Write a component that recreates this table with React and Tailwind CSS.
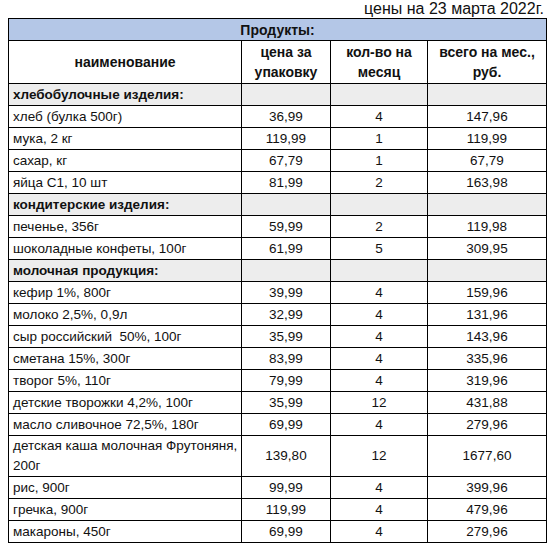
const groups = [
  {
    title: "хлебобулочные изделия:",
    items: [
      ["хлеб (булка 500г)", "36,99", "4", "147,96"],
      ["мука, 2 кг", "119,99", "1", "119,99"],
      ["сахар, кг", "67,79", "1", "67,79"],
      ["яйца С1, 10 шт", "81,99", "2", "163,98"],
    ],
  },
  {
    title: "кондитерские изделия:",
    items: [
      ["печенье, 356г", "59,99", "2", "119,98"],
      ["шоколадные конфеты, 100г", "61,99", "5", "309,95"],
    ],
  },
  {
    title: "молочная продукция:",
    items: [
      ["кефир 1%, 800г", "39,99", "4", "159,96"],
      ["молоко 2,5%, 0,9л", "32,99", "4", "131,96"],
      ["сыр российский  50%, 100г", "35,99", "4", "143,96"],
      ["сметана 15%, 300г", "83,99", "4", "335,96"],
      ["творог 5%, 110г", "79,99", "4", "319,96"],
      ["детские творожки 4,2%, 100г", "35,99", "12", "431,88"],
      ["масло сливочное 72,5%, 180г", "69,99", "4", "279,96"],
      ["детская каша молочная Фрутоняня,\n200г", "139,80", "12", "1677,60"],
      ["рис, 900г", "99,99", "4", "399,96"],
      ["гречка, 900г", "119,99", "4", "479,96"],
      ["макароны, 450г", "69,99", "4", "279,96"],
    ],
  },
];

const cell = "border border-black px-1 align-middle";

export default function App() {
  return (
    <div className="w-[551px] h-[543px] bg-white text-[#111] font-['Liberation_Sans',Arial,sans-serif] overflow-hidden">
      <div className="h-[18px] pr-[7px] text-right text-[16px] leading-[18px]">
        цены на 23 марта 2022г.
      </div>
      <table className="ml-[8px] w-[538px] border-collapse table-fixed text-[13.5px] leading-[20px]">
        <colgroup>
          <col className="w-[233px]" />
          <col className="w-[89px]" />
          <col className="w-[97px]" />
          <col className="w-[119px]" />
        </colgroup>
        <tbody>
          <tr className="h-[22px] bg-[#b4c7e7]">
            <td colSpan={4} className={`${cell} text-center font-bold text-[14px]`}>
              Продукты:
            </td>
          </tr>
          <tr className="h-[43px] font-bold text-center text-[14px]">
            <td className={cell}>наименование</td>
            <td className={cell}>
              цена за
              <br />
              упаковку
            </td>
            <td className={cell}>
              кол-во на
              <br />
              месяц
            </td>
            <td className={cell}>
              всего на мес.,
              <br />
              руб.
            </td>
          </tr>
          {groups.map((g) => (
            <>
              <tr key={g.title} className="h-[22px] bg-[#ededed]">
                <td className={`${cell} font-bold`}>{g.title}</td>
                <td className={cell}></td>
                <td className={cell}></td>
                <td className={cell}></td>
              </tr>
              {g.items.map((r) => (
                <tr key={r[0]} className={r[0].includes("\n") ? "h-[41px]" : "h-[22px]"}>
                  <td className={`${cell} whitespace-pre`}>{r[0]}</td>
                  <td className={`${cell} text-center`}>{r[1]}</td>
                  <td className={`${cell} text-center`}>{r[2]}</td>
                  <td className={`${cell} text-center`}>{r[3]}</td>
                </tr>
              ))}
            </>
          ))}
        </tbody>
      </table>
    </div>
  );
}
